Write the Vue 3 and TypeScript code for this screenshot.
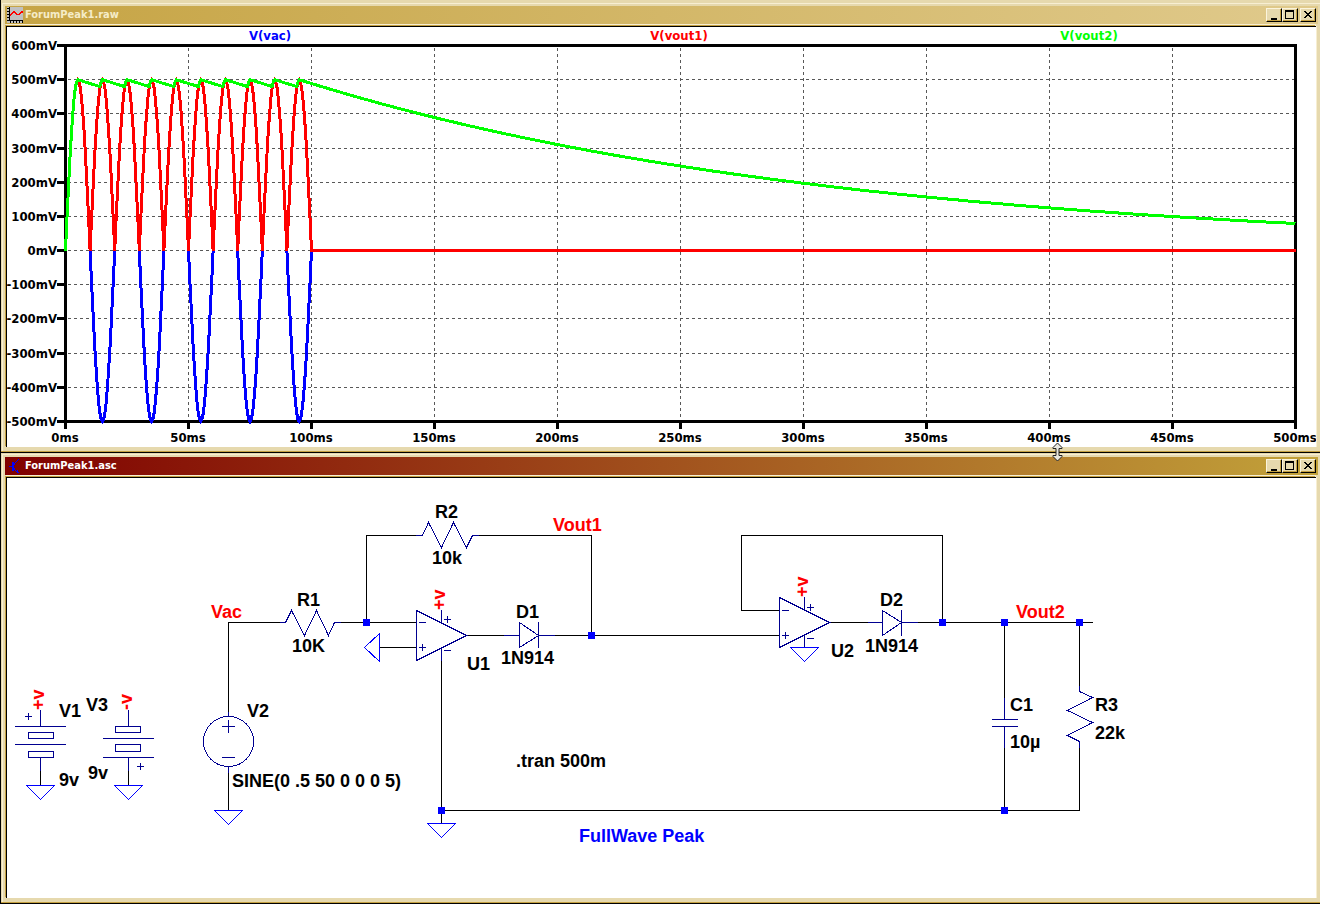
<script setup lang="ts">
interface Label {
  text: string
  x: number
  y: number
  kind?: string
}

// Waveform plot scales
const xOf = (ms: number): number => 65 + (ms * 1230) / 500
const yOf = (mv: number): number => 45 + ((600 - mv) * 376) / 1100

const xTicks = Array.from({ length: 11 }, (_, i) => ({
  label: `${i * 50}ms`,
  x: Math.round(xOf(i * 50)),
}))
const yTicks = Array.from({ length: 12 }, (_, i) => ({
  label: `${600 - i * 100}mV`,
  y: Math.round(yOf(600 - i * 100)),
}))

const traceNames: Label[] = [
  { text: 'V(vac)', x: 270, y: 40, kind: 'blue' },
  { text: 'V(vout1)', x: 679, y: 40, kind: 'red' },
  { text: 'V(vout2)', x: 1089, y: 40, kind: 'green' },
]

const sine = (t: number): number => (t < 100 ? 500 * Math.sin((Math.PI * t) / 10) : 0)

function trace(fn: (t: number) => number, step: number, end: number): string {
  const pts: string[] = []
  for (let t = 0; t <= end; t += step) {
    pts.push(`${xOf(t).toFixed(1)},${yOf(fn(t)).toFixed(1)}`)
  }
  return pts.join(' ')
}

// Peak detector: follows the rectified sine, decays through R3 and C1 (220 ms)
let held = 0
const peak = (t: number): number => {
  held = Math.max(Math.abs(sine(t)), held * Math.exp(-0.5 / 220))
  return held
}

const vac = trace(sine, 0.5, 100)
const vout1 = trace((t) => Math.abs(sine(t)), 0.5, 500)
const vout2 = trace(peak, 0.5, 500)

// Schematic
const wires =
  'M228 712V622H280M340 622H416M366 622V535H416M478 535H591V635M379 647H416' +
  'M441 660V823M466 635H504M554 635H779M779 610H741V535H942V622M829 622H868' +
  'M917 622H1092M1004 622V698M1004 747V810M1079 622V686M1079 747V810H441' +
  'M40 770V785M128 770V785M228 772V810'

const symbols =
  'M280 622H285L291 610L304 635L316 610L328 635L334 622H340' +
  'M416 535H422L428 522L441 547L453 522L466 547L472 535H478' +
  'M416 610V660L466 635ZM441 610V622M441 648V660' +
  'M419 622H425M419 647H425M422 644V650M444 619H450M447 616V622M444 650H450' +
  'M504 635H519M519 622V647M519 622L538 635L519 647M538 622V647M538 635H554' +
  'M779 597V647L829 622ZM804 597V609M804 635V647' +
  'M782 610H788M782 635H788M785 632V638M807 607H813M810 604V610M807 638H813' +
  'M868 622H882M882 610V635M882 610L901 622L882 635M901 610V635M901 622H917' +
  'M1004 698V719M992 719H1017M992 726H1017M1004 726V747' +
  'M1079 686V691L1092 697L1067 710L1092 722L1067 735L1079 741V747' +
  'M40 710V726M15 726H65M28 732H53V738H28ZM15 744H65M28 751H53V757H28ZM40 757V770' +
  'M25 716H31M28 713V719' +
  'M128 710V726M115 726H140V732H115ZM103 738H153M115 744H140V751H115ZM103 757H153M128 757V770' +
  'M137 766H143M140 763V769' +
  'M228 712V716M222 726H234M228 720V732M222 757H234M228 766V772'

const grounds =
  'M379 633V661L364 647ZM790 647H818L804 661ZM427 823H455L441 837Z' +
  'M214 810H242L228 824ZM26 785H54L40 799ZM114 785H142L128 799Z'

const nodes: [number, number][] = [
  [366, 622], [591, 635], [942, 622], [1004, 622], [1079, 622], [441, 810], [1004, 810],
]

const labels: Label[] = [
  { text: 'R2', x: 435, y: 518 },
  { text: '10k', x: 432, y: 564 },
  { text: 'R1', x: 297, y: 606 },
  { text: '10K', x: 292, y: 652 },
  { text: 'Vac', x: 211, y: 618, kind: 'red' },
  { text: 'Vout1', x: 553, y: 531, kind: 'red' },
  { text: 'U1', x: 467, y: 670 },
  { text: 'D1', x: 516, y: 618 },
  { text: '1N914', x: 501, y: 664 },
  { text: 'U2', x: 831, y: 657 },
  { text: 'D2', x: 880, y: 606 },
  { text: '1N914', x: 865, y: 652 },
  { text: 'Vout2', x: 1016, y: 618, kind: 'red' },
  { text: 'C1', x: 1010, y: 711 },
  { text: '10µ', x: 1010, y: 748 },
  { text: 'R3', x: 1095, y: 711 },
  { text: '22k', x: 1095, y: 739 },
  { text: '.tran 500m', x: 516, y: 767 },
  { text: 'FullWave Peak', x: 579, y: 842, kind: 'blue' },
  { text: 'V1', x: 59, y: 717 },
  { text: 'V3', x: 86, y: 711 },
  { text: '9v', x: 59, y: 786 },
  { text: '9v', x: 88, y: 779 },
  { text: 'V2', x: 247, y: 717 },
  { text: 'SINE(0 .5 50 0 0 0 5)', x: 232, y: 787 },
]

const rails: Label[] = [
  { text: '+v', x: 445, y: 610 },
  { text: '+v', x: 808, y: 597 },
  { text: '+v', x: 44, y: 710 },
  { text: '-v', x: 132, y: 710 },
]
</script>

<template>
  <main class="workspace">
    <section class="window">
      <header class="title inactive">
        <svg class="app-icon" viewBox="0 0 16 16" shape-rendering="crispEdges" aria-hidden="true">
          <rect width="16" height="16" fill="#c0c0c0" />
          <path d="M2 0h1v14H2zM2 13h14v1H2zM0 1h2v1H0zM0 4h2v1H0zM0 7h2v1H0zM0 10h2v1H0zM0 13h2v1H0zM3 14h1v2H3zM6 14h1v2H6zM9 14h1v2H9zM12 14h1v2h-1zM15 14h1v2h-1z" fill="#000" />
          <path d="M3 7h1v2H3zM4 6h1v2H4zM5 5h1v2H5zM6 4h2v2H6zM8 5h1v2H8zM9 6h1v2H9zM10 7h2v1h-2zM12 6h1v2h-1zM13 5h1v2h-1zM14 4h2v2h-2z" fill="#f00" />
        </svg>
        <h2>ForumPeak1.raw</h2>
        <div class="controls">
          <button type="button" aria-label="Minimize"><svg viewBox="0 0 12 10"><path d="M3 8h6v2H3z" /></svg></button>
          <button type="button" aria-label="Maximize"><svg viewBox="0 0 12 10"><path d="M1 0h9v9H1zM2 2v6h7V2z" fill-rule="evenodd" /></svg></button>
          <button type="button" aria-label="Close" class="close"><svg viewBox="0 0 12 10"><path d="M2 1h2v1h1v1h2V2h1V1h2v1H9v1H8v1H7v1h1v1h1v1h1v1H8V7H7V6H5v1H4v1H2V7h1V6h1V5h1V4H4V3H3V2H2z" /></svg></button>
        </div>
      </header>
      <div class="client">
        <svg class="drawing" viewBox="7 27 1309 420" role="img" aria-label="Waveforms">
          <g transform="translate(0.5 0.5)" shape-rendering="crispEdges" fill="none">
            <g class="grid">
              <path v-for="t in yTicks.slice(1, -1)" :key="t.label" :d="`M67 ${t.y}H1294`" />
              <path v-for="t in xTicks.slice(1, -1)" :key="t.label" :d="`M${t.x} 47V420`" />
            </g>
            <g class="axis">
              <path v-for="t in yTicks" :key="t.label" :d="`M56 ${t.y}H65`" />
              <path v-for="t in xTicks" :key="t.label" :d="`M${t.x} 421V428`" />
              <rect x="65" y="45" width="1230" height="376" />
            </g>
            <g class="traces">
              <polyline :points="vac" stroke="#0000ff" />
              <polyline :points="vout1" stroke="#ff0000" />
              <polyline :points="vout2" stroke="#00ff00" />
            </g>
          </g>
          <g class="plot-text">
            <text v-for="n in traceNames" :key="n.text" :x="n.x" :y="n.y" :class="n.kind" text-anchor="middle">{{ n.text }}</text>
            <text v-for="t in yTicks" :key="t.label" x="57" :y="t.y + 5" text-anchor="end">{{ t.label }}</text>
            <text v-for="t in xTicks" :key="t.label" :x="t.x" y="442" text-anchor="middle">{{ t.label }}</text>
          </g>
        </svg>
      </div>
      <svg class="pointer" viewBox="0 0 11 20" aria-hidden="true">
        <path d="M5.5 1L10 5.5V6.5H7V13.5H10V14.5L5.5 19L1 14.5V13.5H4V6.5H1V5.5Z" fill="#e8e8e0" stroke="#222" />
      </svg>
    </section>

    <section class="window">
      <header class="title active">
        <svg class="app-icon" viewBox="0 0 16 16" shape-rendering="crispEdges" aria-hidden="true">
          <path d="M2 8h3v1H2zM5 4h2v9H5zM7 5h1v2H7zM8 4h1v1H8zM9 3h1v1H9zM10 2h1v1h-1zM11 1h1v1h-1zM7 10h1v2H7zM8 12h1v1H8zM9 13h1v1H9zM10 12h1v3h-1zM11 14h1v1h-1z" fill="#00f" />
        </svg>
        <h2>ForumPeak1.asc</h2>
        <div class="controls">
          <button type="button" aria-label="Minimize"><svg viewBox="0 0 12 10"><path d="M3 8h6v2H3z" /></svg></button>
          <button type="button" aria-label="Maximize"><svg viewBox="0 0 12 10"><path d="M1 0h9v9H1zM2 2v6h7V2z" fill-rule="evenodd" /></svg></button>
          <button type="button" aria-label="Close" class="close"><svg viewBox="0 0 12 10"><path d="M2 1h2v1h1v1h2V2h1V1h2v1H9v1H8v1H7v1h1v1h1v1h1v1H8V7H7V6H5v1H4v1H2V7h1V6h1V5h1V4H4V3H3V2H2z" /></svg></button>
        </div>
      </header>
      <div class="client">
        <svg class="drawing" viewBox="7 478 1309 420" role="img" aria-label="Full wave peak detector schematic">
          <g transform="translate(0.5 0.5)" shape-rendering="crispEdges" fill="none" stroke-linecap="square">
            <path :d="wires" stroke="#000" />
            <path :d="symbols" stroke="#000090" />
            <circle cx="228" cy="741" r="25" stroke="#000090" />
            <path :d="grounds" stroke="#0000ff" />
          </g>
          <rect v-for="[x, y] in nodes" :key="`${x}-${y}`" :x="x - 3" :y="y - 3" width="7" height="7" fill="#0000ff" />
          <g class="schematic-text">
            <text v-for="l in labels" :key="`${l.x}-${l.y}`" :x="l.x" :y="l.y" :class="l.kind">{{ l.text }}</text>
            <text v-for="r in rails" :key="`${r.x}-${r.y}`" class="red" :transform="`translate(${r.x} ${r.y}) rotate(-90)`">{{ r.text }}</text>
          </g>
        </svg>
      </div>
    </section>
  </main>
</template>

<style>
body {
  margin: 0;
  background: #e6d9ae;
}
</style>

<style scoped>
.workspace {
  padding-top: 2px;
  background: #e6d9ae;
  border-left: 1px solid #000;
}
.window {
  position: relative;
  padding: 4px 2px 5px 4px;
  background: #e6d9ae;
  border-bottom: 1px solid #000;
  box-shadow: inset 0 -1px #c4a040, inset 1px 1px #e6d9ae, inset 2px 2px #f7eed2;
}
.title {
  display: flex;
  align-items: center;
  box-sizing: border-box;
  height: 18px;
  padding: 0 2px;
}
.inactive {
  background: linear-gradient(90deg, #c6a444, #e0ca8c);
  color: #f5ecc8;
}
.active {
  background: linear-gradient(90deg, #800000, #c2a23a);
  color: #fff;
}
.app-icon {
  width: 16px;
  height: 16px;
  margin-right: 2px;
}
h2 {
  flex: 1;
  margin: 0;
  font: bold 11px/14px "DejaVu Sans Condensed", "DejaVu Sans", sans-serif;
}
.controls {
  display: flex;
}
button {
  box-sizing: border-box;
  width: 16px;
  height: 14px;
  padding: 1px;
  border: 1px solid #000;
  border-top-color: #fbf4dc;
  border-left-color: #fbf4dc;
  border-radius: 0;
  background: #e6d9ae;
  box-shadow: inset -1px -1px #c4a040;
}
button svg {
  display: block;
  width: 12px;
  height: 10px;
  shape-rendering: crispEdges;
}
.close {
  margin-left: 2px;
}
.client {
  margin: 2px 2px 0 1px;
  border-top: 1px solid #000;
  border-left: 1px solid #000;
  background: #fff;
  box-shadow: -1px -1px #c4a040, 0 -2px #f7eed2, 1px 0 #f7eed2;
}
.drawing {
  display: block;
  width: 100%;
  height: auto;
}
.grid path {
  stroke: #585858;
  stroke-dasharray: 3 3;
}
.axis {
  stroke: #000;
  stroke-width: 3;
}
.traces {
  stroke-width: 3;
}
.plot-text {
  font: bold 13px "DejaVu Sans Condensed", "DejaVu Sans", sans-serif;
}
.schematic-text {
  font: bold 18px "Liberation Sans", Arial, sans-serif;
}
.blue {
  fill: #0000ff;
}
.red {
  fill: #ff0000;
}
.green {
  fill: #00ff00;
}
.pointer {
  position: absolute;
  z-index: 1;
  right: 20%;
  bottom: -10px;
  width: 11px;
  height: 20px;
  margin-right: -7px;
}
</style>
